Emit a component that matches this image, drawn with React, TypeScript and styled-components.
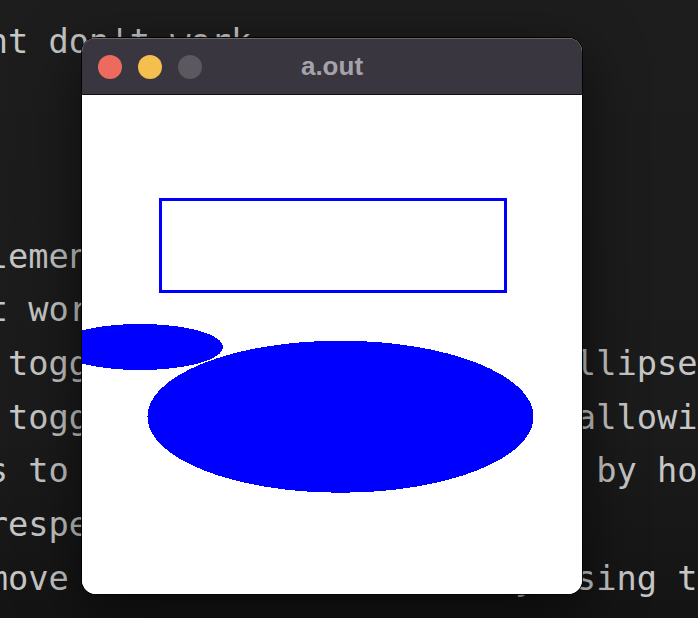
import React from 'react'
import styled, { createGlobalStyle } from 'styled-components'

const GlobalStyle = createGlobalStyle`
  html, body {
    margin: 0;
    padding: 0;
    background: #1c1c1c;
  }
  #root {
    width: 698px;
    height: 618px;
  }
`

const terminalLines = [
  "nt don't work",
  '',
  '',
  '',
  'lemented the following:',
  't working yet',
  ' toggle the fill mode of an ellipse',
  ' toggle the border on a rect allowing',
  's to resize the shapes freely by holding',
  'respectively.',
  'move the window contents by using the mouse',
]

const Desktop = styled.div`
  position: relative;
  width: 698px;
  height: 618px;
  overflow: hidden;
  background: linear-gradient(180deg, #1d1d1d 0%, #1b1b1b 70%, #141414 100%);
`

const TerminalText = styled.pre`
  margin: 0 0 0 -12.3px;
  padding-top: 15px;
  font-family: 'DejaVu Sans Mono', 'Liberation Mono', monospace;
  font-size: 33.7px;
  line-height: 53.67px;
  color: #c6c6c6;
  white-space: pre;
`

const Window = styled.div`
  position: absolute;
  left: 82px;
  top: 38px;
  width: 500px;
  height: 556px;
  display: flex;
  flex-direction: column;
  border-radius: 14px;
  overflow: hidden;
  background: #ffffff;
  box-shadow: 0 0 0 1px rgba(0, 0, 0, 0.85), 0 18px 60px rgba(0, 0, 0, 0.6);
`

const TitleBar = styled.div`
  height: 57px;
  flex: none;
  display: grid;
  grid-template-columns: 1fr auto 1fr;
  align-items: center;
  background: #3a3640;
  border-top: 1px solid #67646c;
  border-bottom: 1px solid #111111;
  box-sizing: border-box;
  padding: 0 16px;
`

const TrafficLights = styled.div`
  display: flex;
  gap: 16px;
`

const Light = styled.span<{ $color: string }>`
  width: 24px;
  height: 24px;
  border-radius: 50%;
  background: ${(p) => p.$color};
`

const Title = styled.div`
  font-family: 'Liberation Sans', Arial, sans-serif;
  font-weight: 700;
  font-size: 26px;
  color: #a6a2ab;
`

const Canvas = styled.div`
  flex: 1;
  background: #ffffff;
  overflow: hidden;

  svg {
    display: block;
  }
`

export default function App() {
  return (
    <>
      <GlobalStyle />
      <Desktop>
        <TerminalText>{terminalLines.join('\n')}</TerminalText>
        <Window>
          <TitleBar>
            <TrafficLights>
              <Light $color="#ed6a5e" />
              <Light $color="#f5bf4f" />
              <Light $color="#5b5860" />
            </TrafficLights>
            <Title>a.out</Title>
            <span />
          </TitleBar>
          <Canvas>
            <svg width="500" height="499" viewBox="0 0 500 499">
              <rect
                x="78.5"
                y="104.5"
                width="345"
                height="92"
                fill="none"
                stroke="#0000ff"
                strokeWidth="3"
                shapeRendering="crispEdges"
              />
              <ellipse cx="58" cy="252" rx="83" ry="23" fill="#0000ff" shapeRendering="crispEdges" />
              <ellipse cx="258.5" cy="321.7" rx="193" ry="76" fill="#0000ff" shapeRendering="crispEdges" />
            </svg>
          </Canvas>
        </Window>
      </Desktop>
    </>
  )
}
